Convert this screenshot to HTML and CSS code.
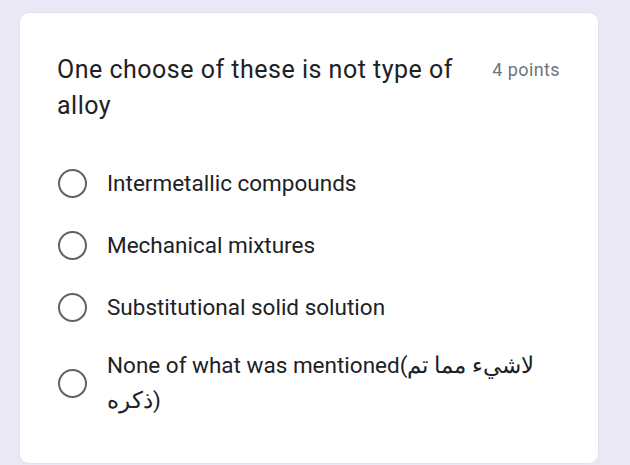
FILE: index.html
```html
<!DOCTYPE html>
<html lang="en">
<head>
<meta charset="utf-8">
<title>Question</title>
<link rel="stylesheet" href="styles.css">
</head>
<body>
<div class="page">
  <div class="card">
    <div class="q-head">
      <div class="q-title">One choose of these is not type of alloy</div>
      <div class="q-points">4 points</div>
    </div>
    <div class="options">
      <label class="option"><span class="radio"></span><span class="opt-text">Intermetallic compounds</span></label>
      <label class="option"><span class="radio"></span><span class="opt-text">Mechanical mixtures</span></label>
      <label class="option"><span class="radio"></span><span class="opt-text">Substitutional solid solution</span></label>
      <label class="option"><span class="radio"></span><span class="opt-text">None of what was mentioned(لاشيء مما تم ذكره)</span></label>
    </div>
  </div>
</div>
</body>
</html>
```

FILE: styles.css
```css
html, body {
  margin: 0;
  padding: 0;
  background: #ebe8f6;
  height: 100%;
  overflow: hidden;
}
.page {
  padding: 12px 31px 0 19px;
}
.card {
  width: 580px;
  height: 452px;
  box-sizing: border-box;
  background: #ffffff;
  border-radius: 10px;
  border: 1px solid #e3e1ea;
  padding: 39px 38px 0 37px;
  font-family: Roboto, "Noto Sans", Arial, sans-serif;
}
.q-head {
  display: flex;
  align-items: flex-start;
}
.q-title {
  flex: 1;
  font-size: 25px;
  line-height: 36px;
  letter-spacing: 0.5px;
  color: #202124;
  padding-right: 8px;
}
.q-points {
  font-size: 18px;
  line-height: 36px;
  letter-spacing: 0.4px;
  color: #70757a;
  white-space: nowrap;
}
.options {
  display: flex;
  flex-direction: column;
  gap: 27px;
  margin-top: 42px;
}
.option {
  display: flex;
  align-items: center;
  gap: 20px;
}
.option:last-child {
  margin-top: -4px;
}
.radio {
  flex: none;
  width: 25px;
  height: 25px;
  border: 2.5px solid #5f6368;
  border-radius: 50%;
  margin-left: 1px;
}
.opt-text {
  font-size: 22.5px;
  line-height: 35px;
  color: #202124;
  max-width: 436px;
}
```
